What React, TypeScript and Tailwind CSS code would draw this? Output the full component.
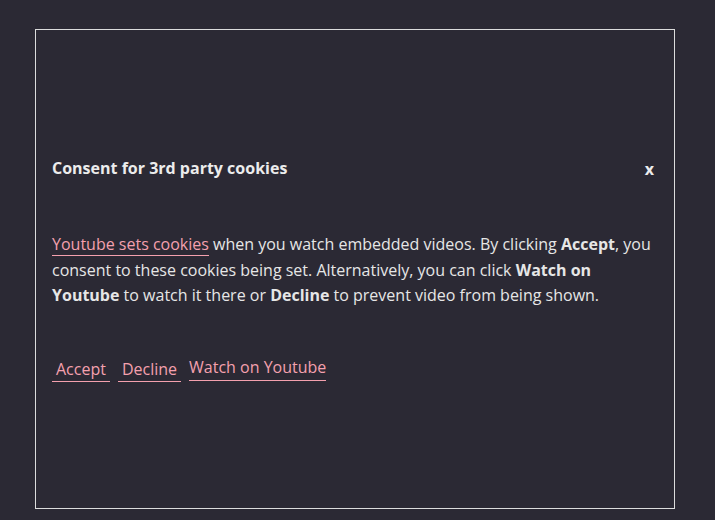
import React from "react";

export default function App() {
    return (
        <div className="min-h-[520px] w-full bg-[#2b2934] pt-[29px] pl-[35px]" style={{ fontFamily: '"Open Sans", sans-serif' }}>
            <div className="flex h-[480px] w-[640px] flex-col justify-center border border-[#dcdcdc] px-4 pb-[2px]">
                {/* header */}
                <div className="flex items-center justify-between">
                    <h2 className="text-[16px] font-bold leading-[26px] text-[#ececec]">Consent for 3rd party cookies</h2>
                    <button className="mt-[2px] px-[4px] text-[16px] font-bold leading-[26px] text-[#ececec]">x</button>
                </div>

                <p className="mt-[50px] text-[16px] leading-[25.5px] text-[#e6e6e6]">
                    <a className="border-b border-[#f4a0ae] text-[#f4a0ae]">Youtube sets cookies</a> when you watch embedded videos. By clicking <b>Accept</b>, you consent to these cookies being set. Alternatively, you can click <b>Watch on Youtube</b> to watch it there or <b>Decline</b> to prevent video from being shown.
                </p>

                <div className="mt-[46px] flex items-center gap-2">
                    <button className="border-b border-[#f4a0ae] px-[4px] pt-[2px] text-[16px] leading-[24px] text-[#f4a0ae]">Accept</button>
                    <button className="border-b border-[#f4a0ae] px-[4px] pt-[2px] text-[16px] leading-[24px] text-[#f4a0ae]">Decline</button>
                    <a className="border-b border-[#f4a0ae] pb-[1px] text-[16px] leading-[24px] text-[#f4a0ae]">Watch on Youtube</a>
                </div>
            </div>
        </div>
    );
}
